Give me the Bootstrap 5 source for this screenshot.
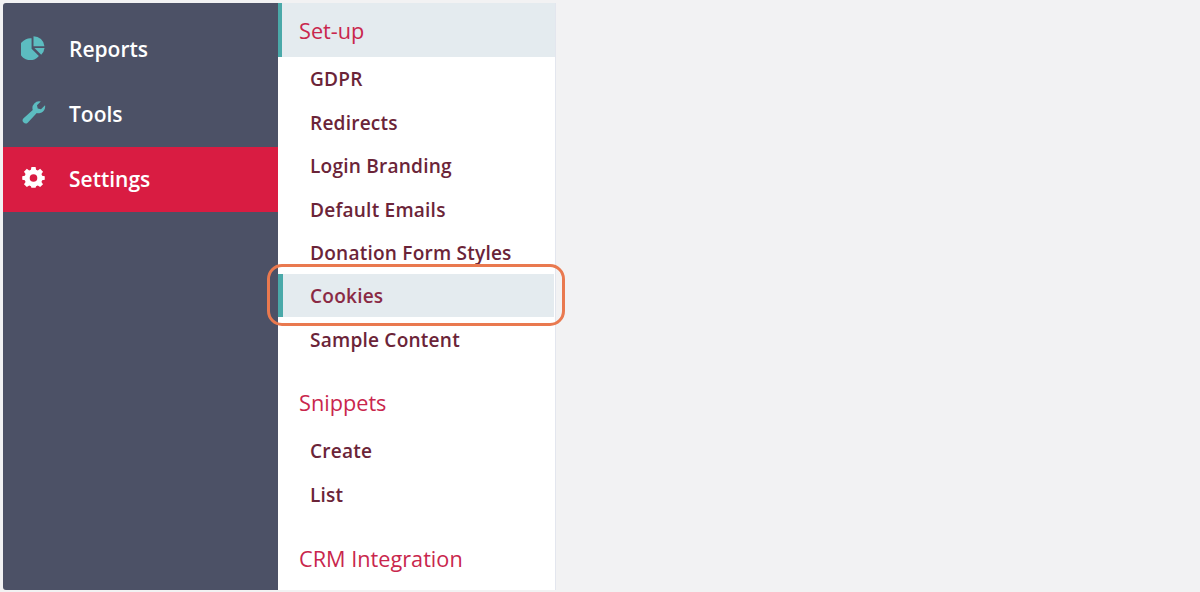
<!DOCTYPE html>
<html lang="en">
<head>
<meta charset="utf-8">
<title>Settings</title>
<link href="https://cdn.jsdelivr.net/npm/bootstrap@5.3.0/dist/css/bootstrap.min.css" rel="stylesheet">
<style>
html,body{height:592px;overflow:hidden}
body{background:#f2f2f3;font-family:"Open Sans","Liberation Sans",sans-serif;position:relative}
.shell{height:592px;padding:3px 0 2px 3px}
.side-nav{width:275px;background:#4c5166;padding-top:14px;border-top-left-radius:3px;border-bottom-left-radius:3px}
.side-link{height:65px;padding-left:18px;color:#fff;font-size:21px;font-weight:600;text-decoration:none}
.side-link svg{width:25px;height:25px;margin-right:23px;margin-top:-5px;flex:none}
.side-link.on{background:#d91c42}
.sub-nav{width:278px;background:#fff;border-right:1px solid #e3e6ee;overflow:hidden}
.sub-head{height:54px;padding-left:21px;font-size:21.7px;color:#c9264d;margin:0;font-weight:500}
.sub-head.cur{background:#e4ebef;border-left:4px solid #4aa9a9;padding-left:17px;padding-top:2px}
.sub-head.gap{height:52px;margin-top:16px}
.sub-head.gap2{height:40px;margin-top:23px}
.sub-list{margin:0}
.sub-link{height:43.4px;padding-left:32px;padding-top:2px;font-size:19.1px;font-weight:600;color:#6b2438;text-decoration:none;letter-spacing:.2px}
.sub-link.cur{background:#e4ebef;border-left:5px solid #4aa9a9;padding-left:27px;color:#8a2a45;margin-right:1px}
.spot{position:absolute;left:267px;top:264px;width:298px;height:62px;border:3px solid #e9794f;border-radius:15px;pointer-events:none}
</style>
</head>
<body>
<div class="shell d-flex">
  <nav class="side-nav flex-shrink-0 d-flex flex-column">
    <a class="side-link d-flex align-items-center" href="#">
      <svg viewBox="0 0 26 26"><path fill="#5cbcc0" d="M11 3.5V14.2L18.6 21.8A11.4 11.4 0 1 1 11 3.5Z"/><path fill="#5cbcc0" d="M13 1.2A11.4 11.4 0 0 1 24.4 11.6H13Z"/><path fill="#5cbcc0" d="M14 13.6H24.5A11.4 11.4 0 0 1 21 20.6Z"/></svg>
      Reports
    </a>
    <a class="side-link d-flex align-items-center" href="#">
      <svg viewBox="0 0 26 26"><path fill="#5cbcc0" d="M25 5.5A7 7 0 0 1 16.4 13.6L7 23.6A3.2 3.2 0 0 1 2.4 19.2L12.2 10.4A7 7 0 0 1 20.6 1.6L16.6 5.4 17.4 8.8 20.8 9.6Z"/></svg>
      Tools
    </a>
    <a class="side-link on d-flex align-items-center" href="#">
      <svg viewBox="0 0 26 26"><path fill="#fff" fill-rule="evenodd" d="M10.6 2H15.4L16 5.2 18 6 20.7 4.2 24 7.5 22.2 10.2 23 12.2 26 12.8V16.8L23 17.4 22.2 19.4 24 22 20.7 25.3 18 23.5 16 24.3 15.4 26H10.6L10 24.3 8 23.5 5.3 25.3 2 22 3.8 19.4 3 17.4 0 16.8V12.8L3 12.2 3.8 10.2 2 7.5 5.3 4.2 8 6 10 5.2ZM13 10.4A4.4 4.4 0 1 0 13 19.2 4.4 4.4 0 1 0 13 10.4Z" transform="translate(1.3 .2) scale(.9)"/></svg>
      Settings
    </a>
  </nav>
  <div class="sub-nav flex-shrink-0">
    <h2 class="sub-head cur d-flex align-items-center">Set-up</h2>
    <div class="sub-list d-flex flex-column">
      <a class="sub-link d-flex align-items-center" href="#">GDPR</a>
      <a class="sub-link d-flex align-items-center" href="#">Redirects</a>
      <a class="sub-link d-flex align-items-center" href="#">Login Branding</a>
      <a class="sub-link d-flex align-items-center" href="#">Default Emails</a>
      <a class="sub-link d-flex align-items-center" href="#">Donation Form Styles</a>
      <a class="sub-link cur d-flex align-items-center" href="#">Cookies</a>
      <a class="sub-link d-flex align-items-center" href="#">Sample Content</a>
    </div>
    <h2 class="sub-head gap d-flex align-items-center">Snippets</h2>
    <div class="sub-list d-flex flex-column">
      <a class="sub-link d-flex align-items-center" href="#">Create</a>
      <a class="sub-link d-flex align-items-center" href="#">List</a>
    </div>
    <h2 class="sub-head gap2 d-flex align-items-center">CRM Integration</h2>
  </div>
</div>
<div class="spot"></div>
<script src="https://cdn.jsdelivr.net/npm/bootstrap@5.3.0/dist/js/bootstrap.bundle.min.js"></script>
</body>
</html>
